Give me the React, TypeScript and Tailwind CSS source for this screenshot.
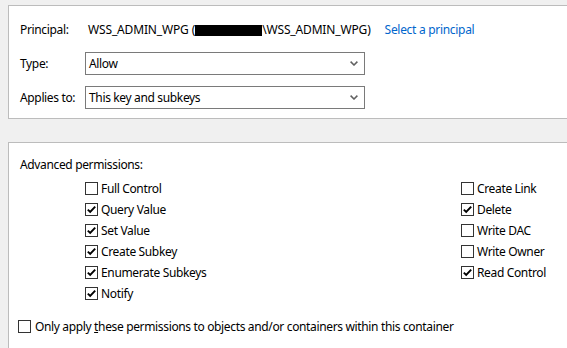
import React from "react";

const font = { fontFamily: '"Noto Sans", "Open Sans", sans-serif' };

const CheckBox = ({ checked }: { checked?: boolean }) => (
  <span className="w-[13px] h-[13px] border border-[#333333] bg-white flex items-center justify-center shrink-0">
    {checked && (
      <svg width="11" height="11" viewBox="0 0 11 11">
        <path d="M1.8 5.6 L4.2 8 L9.2 2.6" fill="none" stroke="#000" strokeWidth="1.9" />
      </svg>
    )}
  </span>
);

const Perm = ({ label, checked }: { label: string; checked?: boolean }) => (
  <div className="h-[21px] flex items-center gap-[3px]">
    <CheckBox checked={checked} />
    <span>{label}</span>
  </div>
);

const Select = ({ value }: { value: string }) => (
  <div className="w-[280px] h-[23px] border border-[#7a7a7a] bg-white flex items-center justify-between pl-[3px] pr-[6px]">
    <span>{value}</span>
    <svg width="8" height="5" viewBox="0 0 8 5">
      <path d="M0.6 0.6 L4 4 L7.4 0.6" fill="none" stroke="#606060" strokeWidth="1.5" />
    </svg>
  </div>
);

export default function App() {
  const left = [
    ["Full Control", false],
    ["Query Value", true],
    ["Set Value", true],
    ["Create Subkey", true],
    ["Enumerate Subkeys", true],
    ["Notify", true],
  ] as const;
  const right = [
    ["Create Link", false],
    ["Delete", true],
    ["Write DAC", false],
    ["Write Owner", false],
    ["Read Control", true],
  ] as const;

  return (
    <div
      className="w-[567px] h-[348px] bg-[#f0f0f0] overflow-hidden pt-[5px] pl-[8px] text-[12px] text-black leading-[16px] tracking-[-0.35px]"
      style={font}
    >
      <section className="w-[600px] h-[114px] bg-white border border-[#bcbcbc] pl-[11px] pt-[13px]">
        <div className="grid grid-cols-[65px_auto] items-center gap-y-[11px]">
          <span className="h-[22px] flex items-center">Principal:</span>
          <div className="h-[22px] flex items-center pl-[3px] tracking-[-0.15px]">
            <span>WSS_ADMIN_WPG (</span>
            <span className="w-[67px] h-[11px] bg-black inline-block" />
            <span>\WSS_ADMIN_WPG)</span>
            <span className="text-[#0066cc] ml-[14px] tracking-[-0.3px]">Select a principal</span>
          </div>
          <span>Type:</span>
          <Select value="Allow" />
          <span>Applies to:</span>
          <Select value="This key and subkeys" />
        </div>
      </section>

      <section className="w-[600px] h-[230px] mt-[23px] bg-white border border-[#bcbcbc] pl-[11px] pt-[14px]">
        <div>Advanced permissions:</div>
        <div className="flex mt-[5px]">
          <div className="w-[441px] pl-[65px] flex flex-col">
            {left.map(([l, c]) => (
              <Perm key={l} label={l} checked={c} />
            ))}
          </div>
          <div className="flex flex-col">
            {right.map(([l, c]) => (
              <Perm key={l} label={l} checked={c} />
            ))}
          </div>
        </div>
        <div className="h-[21px] flex items-center gap-[4px] mt-[12px] -ml-[2px]">
          <CheckBox />
          <span>
            Only apply <u>t</u>hese permissions to objects and/or containers within this container
          </span>
        </div>
      </section>
    </div>
  );
}
